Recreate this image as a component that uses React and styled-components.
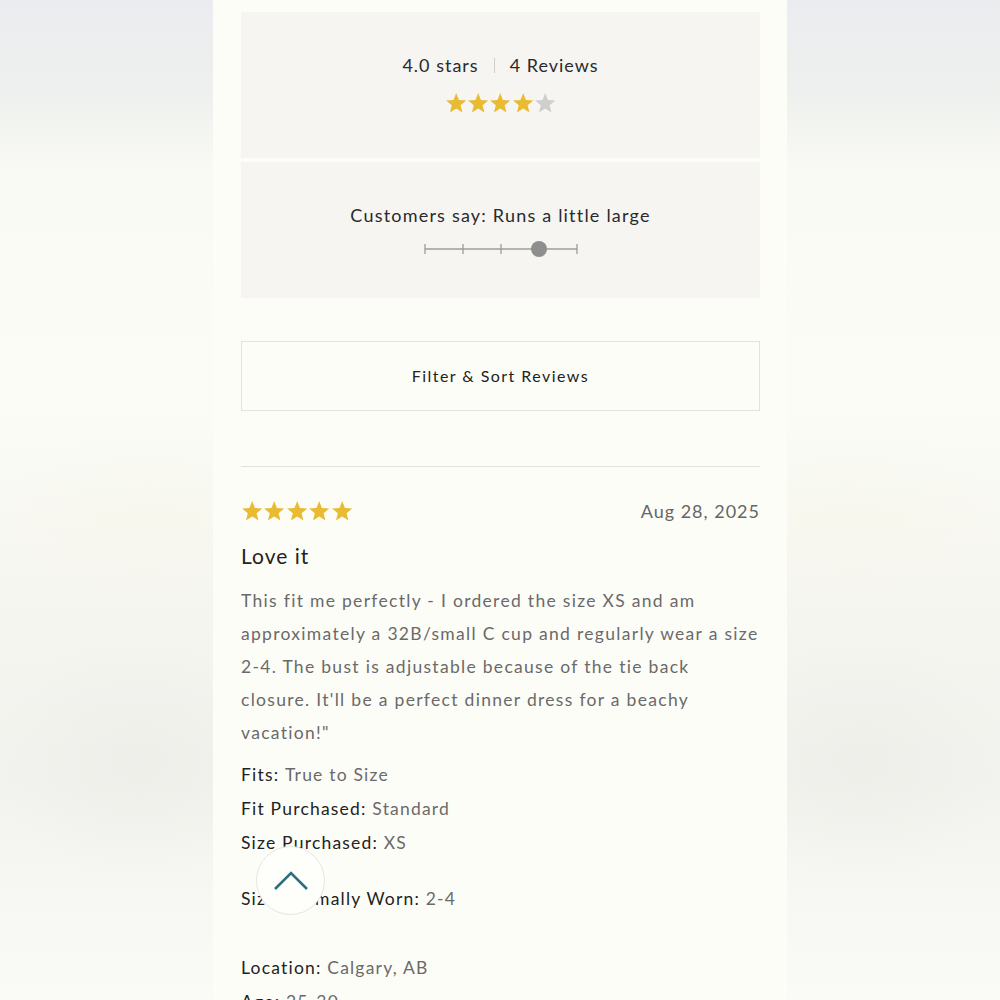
import React from "react";
import styled, { createGlobalStyle } from "styled-components";

const Global = createGlobalStyle`
  html, body { margin: 0; padding: 0; }
  body {
    background: #fafbf6;
    font-family: Lato, "Noto Sans", "Liberation Sans", sans-serif;
    -webkit-font-smoothing: antialiased;
  }
`;

const Page = styled.div`
  display: flex;
  width: 1000px;
  height: 1000px;
  overflow: hidden;
`;

const Side = styled.div`
  flex: 0 0 213px;
  height: 100%;
  background:
    radial-gradient(ellipse 150px 120px at ${(p) => (p.$right ? "35%" : "65%")} 76%, rgba(234, 235, 229, 0.55), transparent),
    radial-gradient(ellipse 160px 90px at ${(p) => (p.$right ? "30%" : "70%")} 52%, rgba(247, 244, 228, 0.35), transparent),
    linear-gradient(180deg, #ebecef 0px, #eef0ee 90px, #f9faf4 170px, #fbfcf6 400px, #f5f5f0 620px, #f2f3ee 780px, #f7f8f3 900px, #fafbf6 1000px);
`;

const Column = styled.main`
  flex: 0 0 574px;
  box-sizing: border-box;
  height: 100%;
  background: #fdfdf8;
  padding: 12px 27px 0 28px;
  display: flex;
  flex-direction: column;
  color: #222;

  & > * {
    flex-shrink: 0;
  }
`;

const Panel = styled.section`
  background: #f6f5f2;
  height: ${(p) => p.$h}px;
  margin-bottom: ${(p) => p.$mb || 0}px;
  display: flex;
  flex-direction: column;
  align-items: center;
  box-sizing: border-box;
  padding-top: ${(p) => p.$pt}px;
`;

const SummaryLine = styled.div`
  font-size: 18px;
  letter-spacing: 1px;
  color: #2a2a2a;
  display: flex;
  align-items: center;
  line-height: 24px;
`;

const Pipe = styled.span`
  width: 1px;
  height: 15px;
  background: #cfcfcc;
  margin: 0 15px;
`;

const StarRow = styled.div`
  display: flex;
  margin-top: ${(p) => p.$mt || 0}px;
`;

const StarSvg = styled.svg`
  width: ${(p) => p.$size}px;
  height: ${(p) => p.$size}px;
  display: block;
`;

const Star = ({ on, size = 22.4 }) => (
  <StarSvg $size={size} viewBox="0 0 24 24">
    <polygon
      points="12,1.2 14.9,8.6 22.8,9.1 16.7,14.1 18.7,21.9 12,17.6 5.3,21.9 7.3,14.1 1.2,9.1 9.1,8.6"
      fill={on ? "#e9bb33" : "#cfcfcd"}
    />
  </StarSvg>
);

const Stars = ({ value, size, mt }) => (
  <StarRow $mt={mt}>
    {[1, 2, 3, 4, 5].map((i) => (
      <Star key={i} on={i <= value} size={size} />
    ))}
  </StarRow>
);

const FitLabel = styled.div`
  font-size: 18px;
  letter-spacing: 1.2px;
  color: #2a2a2a;
  line-height: 24px;
`;

const Scale = styled.svg`
  display: block;
  margin-top: 12px;
  margin-left: 2px;
`;

const FitScale = ({ pos }) => {
  const xs = [1, 39, 77, 115, 153];
  return (
    <Scale width="156" height="20" viewBox="0 0 156 20">
      <line x1="1" y1="10" x2="153" y2="10" stroke="#9c9c9a" strokeWidth="1.3" />
      {xs.map((x) => (
        <line key={x} x1={x} y1="5" x2={x} y2="15" stroke="#9c9c9a" strokeWidth="1.3" />
      ))}
      <circle cx={xs[pos]} cy="10" r="8" fill="#8e8e8e" />
    </Scale>
  );
};

const FilterButton = styled.button`
  height: 70px;
  margin-top: 43px;
  background: transparent;
  border: 1px solid #e3e3df;
  font-family: inherit;
  font-size: 16px;
  letter-spacing: 1.45px;
  color: #222;
  padding-bottom: 3px;
  cursor: pointer;
`;

const Divider = styled.hr`
  border: none;
  height: 1px;
  background: #e2e2de;
  margin: 55px 0 0;
`;

const Review = styled.article`
  padding-top: 33px;
`;

const ReviewHead = styled.div`
  display: flex;
  justify-content: space-between;
  align-items: center;
`;

const DateText = styled.span`
  font-size: 18px;
  letter-spacing: 1px;
  color: #666;
`;

const Title = styled.h3`
  margin: 19px 0 0;
  font-size: 21px;
  font-weight: 400;
  letter-spacing: 1px;
  color: #222;
  line-height: 30px;
`;

const Body = styled.p`
  margin: 14px 0 0;
  font-size: 17.5px;
  line-height: 32.8px;
  letter-spacing: 1.3px;
  color: #6a6a6a;
`;

const BodyLine = styled.span`
  display: block;
  white-space: nowrap;
`;

const Attrs = styled.dl`
  margin: 9px 0 0;
`;

const Attr = styled.div`
  font-size: 17.5px;
  letter-spacing: 1.2px;
  line-height: 34px;
  margin-top: ${(p) => p.$gap || 0}px;
`;

const Term = styled.dt`
  display: inline;
  color: #222;
`;

const Value = styled.dd`
  display: inline;
  margin: 0;
  color: #6a6a6a;
`;

/* Floating scroll-to-top control over the review text */
const BackToTop = styled.button`
  position: fixed;
  left: 256px;
  top: 846px;
  width: 69px;
  height: 69px;
  border-radius: 50%;
  background: #fefefb;
  border: 1px solid #e4e4e1;
  display: flex;
  align-items: center;
  justify-content: center;
  padding: 0;
  cursor: pointer;
`;

const bodyLines = [
  "This fit me perfectly - I ordered the size XS and am",
  "approximately a 32B/small C cup and regularly wear a size",
  "2-4. The bust is adjustable because of the tie back",
  "closure. It'll be a perfect dinner dress for a beachy",
  'vacation!"',
];

const attrs = [
  ["Fits", "True to Size"],
  ["Fit Purchased", "Standard"],
  ["Size Purchased", "XS"],
  ["Size Normally Worn", "2-4", 22],
  ["Location", "Calgary, AB", 35],
  ["Age", "25-30"],
];

export default function App() {
  return (
    <>
      <Global />
      <Page>
        <Side />
        <Column>
          <Panel $h={146} $mb={4} $pt={41}>
            <SummaryLine>
              4.0 stars<Pipe />4 Reviews
            </SummaryLine>
            <Stars value={4} mt={15} />
          </Panel>
          <Panel $h={136} $pt={41}>
            <FitLabel>Customers say: Runs a little large</FitLabel>
            <FitScale pos={3} />
          </Panel>
          <FilterButton>Filter &amp; Sort Reviews</FilterButton>
          <Divider />
          <Review>
            <ReviewHead>
              <Stars value={5} />
              <DateText>Aug 28, 2025</DateText>
            </ReviewHead>
            <Title>Love it</Title>
            <Body>
              {bodyLines.map((l) => (
                <BodyLine key={l}>{l}</BodyLine>
              ))}
            </Body>
            <Attrs>
              {attrs.map(([k, v, gap]) => (
                <Attr key={k} $gap={gap}>
                  <Term>{k}:</Term> <Value>{v}</Value>
                </Attr>
              ))}
            </Attrs>
          </Review>
        </Column>
        <Side $right />
      </Page>
      <BackToTop aria-label="Back to top">
        <svg width="36" height="22" viewBox="0 0 36 22">
          <polyline points="2,19 18,3 34,19" fill="none" stroke="#2b6f7f" strokeWidth="2.6" />
        </svg>
      </BackToTop>
    </>
  );
}
